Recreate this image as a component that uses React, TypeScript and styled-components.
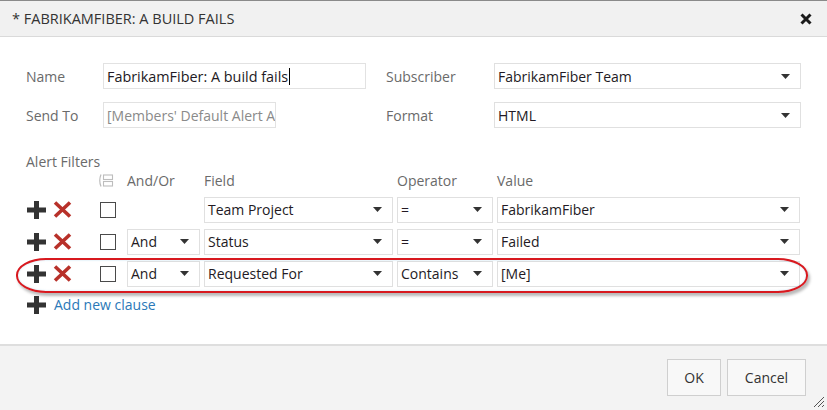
import React from "react";
import styled, { createGlobalStyle } from "styled-components";

const Global = createGlobalStyle`
  html, body { margin: 0; padding: 0; background: #ffffff; }
  body { font-family: "Open Sans", "Noto Sans", sans-serif; }
  * { box-sizing: border-box; }
`;

const Dialog = styled.div`
  position: relative;
  width: 827px;
  height: 410px;
  display: flex;
  flex-direction: column;
  background: #fff;
  border-top: 1px solid #8a8a8a;
  overflow: hidden;
`;

const TitleBar = styled.div`
  height: 36px;
  flex: 0 0 36px;
  background: #f1f1f1;
  border-bottom: 1px solid #dadada;
  display: flex;
  align-items: center;
  justify-content: space-between;
  padding: 0 15px 0 12px;
`;

const Title = styled.div`
  font-size: 14.5px;
  color: #333;
`;

const CloseButton = styled.button`
  border: 0;
  background: transparent;
  padding: 0;
  width: 12px;
  height: 12px;
  display: flex;
  cursor: pointer;
`;

const Body = styled.div`
  position: relative;
  flex: 1;
  padding: 26px 0 0 0;
`;

const FormGrid = styled.div`
  display: grid;
  grid-template-columns: 77px 283px 108px 307px;
  row-gap: 13px;
  padding-left: 26px;
  align-items: center;
`;

const Label = styled.div`
  font-size: 14px;
  color: #6a6a6a;
`;

const TextInput = styled.div<{ $w: number; $muted?: boolean }>`
  width: ${(p) => p.$w}px;
  height: 26px;
  border: 1px solid #e2e2e2;
  display: flex;
  align-items: center;
  padding-left: 3px;
  font-size: ${(p) => (p.$muted ? "14px" : "14.4px")};
  color: ${(p) => (p.$muted ? "#8a8a8a" : "#231a24")};
  white-space: nowrap;
  overflow: hidden;
`;

const Caret = styled.span`
  display: inline-block;
  width: 1px;
  height: 17px;
  background: #000;
  margin-left: 1px;
`;

const Select = styled.div<{ $w?: number }>`
  ${(p) => (p.$w ? `width: ${p.$w}px;` : "")}
  height: 26px;
  border: 1px solid #e0e0e0;
  background: #fff;
  display: flex;
  align-items: center;
  justify-content: space-between;
  padding: 0 10px 0 3px;
  font-size: 14px;
  color: #231a24;
  white-space: nowrap;
`;

const Arrow = () => (
  <svg width="9" height="5" viewBox="0 0 9 5">
    <path d="M0 0 L9 0 L4.5 5 Z" fill="#333" />
  </svg>
);

const SectionLabel = styled(Label)`
  margin: 24px 0 0 26px;
  line-height: 19px;
`;

const FilterGrid = styled.div`
  display: grid;
  grid-template-columns: 22px 41px 25px 73px 189px 96px 303px;
  grid-template-rows: 21px repeat(3, 25px);
  column-gap: 4px;
  row-gap: 7px;
  padding-left: 27px;
  margin-top: -2px;
  align-items: center;
`;

const HeaderRow = styled.div`
  display: contents;
`;

const ColHead = styled.div`
  font-size: 14px;
  color: #6a6a6a;
  line-height: 19px;
  align-self: end;
`;

const FilterRow = styled.div`
  display: contents;
`;

const IconCell = styled.div<{ $end?: boolean }>`
  display: flex;
  align-items: center;
  ${(p) => (p.$end ? "align-self: end; padding-bottom: 3px;" : "")}
`;

const Checkbox = styled.div`
  width: 16px;
  height: 16px;
  border: 1px solid #4a4a4a;
  background: #fff;
  margin-left: 2px;
`;

const AddClause = styled.div`
  display: flex;
  align-items: center;
  gap: 8px;
  padding-left: 27px;
  margin-top: 9px;
  font-size: 14px;
  color: #2b78b8;
`;

const Highlight = styled.div`
  position: absolute;
  left: 16px;
  top: 221px;
  width: 792px;
  height: 35px;
  border: 2px solid #d8191f;
  border-radius: 30px / 17px;
  box-shadow: 2px 3px 3px rgba(0, 0, 0, 0.28), inset 0 0 2px rgba(120, 190, 230, 0.5);
  pointer-events: none;
`;

const Footer = styled.div`
  flex: 0 0 66px;
  background: #f3f3f3;
  border-top: 2px solid #dedede;
  display: flex;
  justify-content: flex-end;
  align-items: flex-start;
  gap: 6px;
  padding: 13px 21px 0 0;
`;

const Button = styled.button<{ $w: number }>`
  width: ${(p) => p.$w}px;
  height: 37px;
  background: #f8f8f8;
  border: 1px solid #cfcfcf;
  font-family: "Open Sans", "Noto Sans", sans-serif;
  font-size: 14px;
  color: #333;
  padding: 0;
`;

const Grip = styled.div`
  position: absolute;
  right: 2px;
  bottom: 2px;
  width: 13px;
  height: 13px;
  display: flex;
`;

const PlusIcon = () => (
  <svg width="19" height="18" viewBox="0 0 19 18">
    <rect x="7" y="0" width="5" height="18" fill="#333" />
    <rect x="0" y="6.5" width="19" height="5" fill="#333" />
  </svg>
);

const RemoveIcon = () => (
  <svg width="19" height="17" viewBox="0 0 19 17">
    <path d="M2 1.5 L17 15.5 M17 1.5 L2 15.5" stroke="#b8312a" strokeWidth="3.6" strokeLinecap="butt" />
  </svg>
);

const GroupIcon = () => (
  <svg width="16" height="13" viewBox="0 0 16 13">
    <path d="M3 0.5 Q0.5 6.5 3 12.5" stroke="#bdbdbd" strokeWidth="1.2" fill="none" />
    <rect x="5.5" y="1" width="9" height="4.5" stroke="#bdbdbd" strokeWidth="1.1" fill="none" />
    <rect x="5.5" y="7.5" width="9" height="4.5" stroke="#bdbdbd" strokeWidth="1.1" fill="none" />
  </svg>
);

type Row = { andOr?: string; field: string; op: string; value: string };
const rows: Row[] = [
  { field: "Team Project", op: "=", value: "FabrikamFiber" },
  { andOr: "And", field: "Status", op: "=", value: "Failed" },
  { andOr: "And", field: "Requested For", op: "Contains", value: "[Me]" },
];

export default function App() {
  return (
    <>
      <Global />
      <Dialog>
        <TitleBar>
          <Title>* FABRIKAMFIBER: A BUILD FAILS</Title>
          <CloseButton aria-label="Close">
            <svg width="12" height="12" viewBox="0 0 12 12">
              <path d="M1.5 1.5 L10.5 10.5 M10.5 1.5 L1.5 10.5" stroke="#1a1a1a" strokeWidth="3" />
            </svg>
          </CloseButton>
        </TitleBar>
        <Body>
          <FormGrid>
            <Label>Name</Label>
            <TextInput $w={263}>
              FabrikamFiber: A build fails
              <Caret />
            </TextInput>
            <Label>Subscriber</Label>
            <Select $w={307}>
              FabrikamFiber Team
              <Arrow />
            </Select>
            <Label>Send To</Label>
            <TextInput $w={173} $muted>
              [Members' Default Alert Address]
            </TextInput>
            <Label>Format</Label>
            <Select $w={307}>
              HTML
              <Arrow />
            </Select>
          </FormGrid>

          <SectionLabel>Alert Filters</SectionLabel>
          <FilterGrid>
            <HeaderRow>
              <span />
              <span />
              <IconCell $end>
                <GroupIcon />
              </IconCell>
              <ColHead>And/Or</ColHead>
              <ColHead>Field</ColHead>
              <ColHead>Operator</ColHead>
              <ColHead>Value</ColHead>
            </HeaderRow>
            {rows.map((r, i) => (
              <FilterRow key={i}>
                <IconCell>
                  <PlusIcon />
                </IconCell>
                <IconCell>
                  <RemoveIcon />
                </IconCell>
                <IconCell>
                  <Checkbox />
                </IconCell>
                {r.andOr ? (
                  <Select>
                    {r.andOr}
                    <Arrow />
                  </Select>
                ) : (
                  <span />
                )}
                <Select>
                  {r.field}
                  <Arrow />
                </Select>
                <Select>
                  {r.op}
                  <Arrow />
                </Select>
                <Select>
                  {r.value}
                  <Arrow />
                </Select>
              </FilterRow>
            ))}
          </FilterGrid>
          <AddClause>
            <PlusIcon />
            Add new clause
          </AddClause>
          <Highlight />
        </Body>
        <Footer>
          <Button $w={54}>OK</Button>
          <Button $w={79}>Cancel</Button>
        </Footer>
        <Grip>
          <svg width="13" height="13" viewBox="0 0 13 13">
            <path d="M12 2 L2 12 M12 6 L6 12 M12 10 L10 12" stroke="#555" strokeWidth="1" />
          </svg>
        </Grip>
      </Dialog>
    </>
  );
}
